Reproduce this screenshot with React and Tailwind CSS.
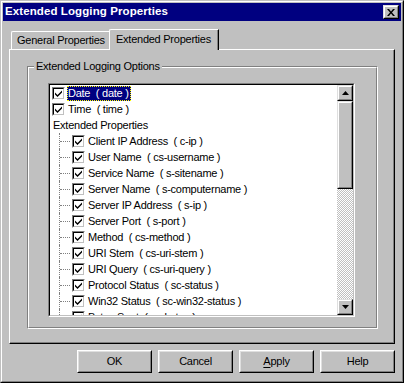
import React from "react";

const fields = [
  ["Client IP Address", "c-ip"],
  ["User Name", "cs-username"],
  ["Service Name", "s-sitename"],
  ["Server Name", "s-computername"],
  ["Server IP Address", "s-ip"],
  ["Server Port", "s-port"],
  ["Method", "cs-method"],
  ["URI Stem", "cs-uri-stem"],
  ["URI Query", "cs-uri-query"],
  ["Protocol Status", "sc-status"],
  ["Win32 Status", "sc-win32-status"],
  ["Bytes Sent", "sc-bytes"],
];

function Check() {
  return (
    <div className="w-[13px] h-[13px] shrink-0 border border-t-[#808080] border-l-[#808080] border-r-white border-b-white">
      <div className="w-full h-full bg-white border border-t-black border-l-black border-r-[#c0c0c0] border-b-[#c0c0c0] flex items-center justify-center">
        <svg width="7" height="7" viewBox="0 0 7 7">
          <path d="M0 2.5 L2.5 5 L7 0.5 L7 2.5 L2.5 7 L0 4.5 Z" fill="#000" />
        </svg>
      </div>
    </div>
  );
}

function Label({ text, selected }) {
  return (
    <span
      className={
        selected
          ? "ml-[2px] h-[15px] leading-[13px] pr-[1px] whitespace-pre border border-dotted border-[#ffff00] bg-[#000080] text-white"
          : "ml-[2px] h-[15px] leading-[13px] pr-[1px] whitespace-pre border border-transparent"
      }
    >
      {text}
    </span>
  );
}

// raised 3d box used for buttons / scrollbar parts
function Raised({ className, children }) {
  return (
    <div className={"shrink-0 bg-[#c0c0c0] border border-t-[#dfdfdf] border-l-[#dfdfdf] border-r-black border-b-black " + className}>
      <div className="w-full h-full border border-t-white border-l-white border-r-[#808080] border-b-[#808080] flex items-center justify-center">
        {children}
      </div>
    </div>
  );
}

function Arrow({ down }) {
  return (
    <svg width="7" height="4" viewBox="0 0 7 4">
      <path d={down ? "M0 0 H7 L3.5 4 Z" : "M0 4 H7 L3.5 0 Z"} fill="#000" />
    </svg>
  );
}

function Button({ children }) {
  return (
    <div className="w-[75px] h-[23px] border border-t-white border-l-white border-r-black border-b-black">
      <div className="w-full h-full border border-t-[#dfdfdf] border-l-[#dfdfdf] border-r-[#808080] border-b-[#808080] flex items-center justify-center">
        {children}
      </div>
    </div>
  );
}

export default function App() {
  return (
    <div className="w-[404px] h-[383px] bg-[#c0c0c0] font-['Liberation_Sans',Arial,sans-serif] text-black text-[11px] tracking-[-0.25px] border border-t-[#c0c0c0] border-l-[#c0c0c0] border-r-black border-b-black">
      <div className="w-full h-full p-[1px] border border-t-white border-l-white border-r-[#808080] border-b-[#808080] flex flex-col">
        {/* title bar */}
        <div className="h-[18px] bg-[#000080] flex items-center justify-between pl-[2px] pr-[2px]">
          <span className="text-white font-bold text-[11.5px] tracking-[0.1px]">Extended Logging Properties</span>
          <Raised className="w-[16px] h-[14px]">
            <svg width="8" height="7" viewBox="0 0 8 7">
              <path d="M0 0 H2 L4 2.4 L6 0 H8 L5 3.5 L8 7 H6 L4 4.6 L2 7 H0 L3 3.5 Z" fill="#000" />
            </svg>
          </Raised>
        </div>

        {/* tabs */}
        <div className="mt-[8px] mx-[6px] h-[20px] flex items-end pl-[2px]">
          <div className="w-[100px] h-[18px] pl-[5px] flex items-center border-t border-l border-r border-t-white border-l-white border-r-black rounded-tl-[2px]">
            General Properties
          </div>
          <div className="relative z-10 -ml-[2px] -mb-[1px] w-[110px] h-[21px] bg-[#c0c0c0] border-t border-l border-r border-t-white border-l-white border-r-black rounded-tl-[2px]">
            <div className="h-full pl-[6px] pb-[2px] flex items-center border-r border-r-[#808080]">
              Extended Properties
            </div>
          </div>
        </div>

        {/* panel */}
        <div className="mx-[6px] h-[295px] border border-t-white border-l-white border-r-black border-b-black">
          <div className="h-full border-r border-b border-r-[#808080] border-b-[#808080] pl-[17px] pt-[16px]">
            {/* group box */}
            <div className="relative w-[351px] h-[263px] border border-t-[#808080] border-l-[#808080] border-r-white border-b-white">
              <span className="absolute left-[6px] -top-[8px] px-[2px] bg-[#c0c0c0] leading-[14px] z-10">
                Extended Logging Options
              </span>
              <div className="h-full border border-t-white border-l-white border-r-[#808080] border-b-[#808080] pl-[19px] pt-[15px]">
                {/* list */}
                <div className="w-[307px] h-[234px] border border-t-[#808080] border-l-[#808080] border-r-white border-b-white">
                  <div className="h-full border border-t-black border-l-black border-r-[#c0c0c0] border-b-[#c0c0c0] bg-white flex">
                    <div className="flex-1 overflow-hidden">
                      <div className="flex items-center h-[16px] pl-[2px]">
                        <Check />
                        <Label text="Date  ( date )" selected />
                      </div>
                      <div className="flex items-center h-[16px] pl-[2px]">
                        <Check />
                        <Label text="Time  ( time )" />
                      </div>
                      <div className="flex items-center h-[16px] pl-[3px]">Extended Properties</div>
                      {fields.map(([name, code]) => (
                        <div key={code} className="flex items-center h-[16px]">
                          <div className="w-[9px] shrink-0" />
                          <div className="w-[13px] h-[16px] shrink-0 border-l border-dotted border-[#808080] flex items-center">
                            <div className="w-[10px] border-t border-dotted border-[#808080]" />
                          </div>
                          <Check />
                          <Label text={`${name}  ( ${code} )`} />
                        </div>
                      ))}
                    </div>
                    {/* scrollbar */}
                    <div className="w-[16px] shrink-0 flex flex-col">
                      <Raised className="h-[16px]">
                        <Arrow />
                      </Raised>
                      <Raised className="h-[88px]" />
                      <div className="flex-1 bg-[image:repeating-conic-gradient(#c0c0c0_0_25%,#ffffff_0_50%)] bg-[length:2px_2px]" />
                      <Raised className="h-[16px]">
                        <Arrow down />
                      </Raised>
                    </div>
                  </div>
                </div>
              </div>
            </div>
          </div>
        </div>

        {/* buttons */}
        <div className="mt-[6px] mx-[6px] flex justify-end gap-[6px]">
          <Button>OK</Button>
          <Button>Cancel</Button>
          <Button>
            <span>
              <span className="underline underline-offset-2">A</span>pply
            </span>
          </Button>
          <Button>Help</Button>
        </div>
      </div>
    </div>
  );
}
